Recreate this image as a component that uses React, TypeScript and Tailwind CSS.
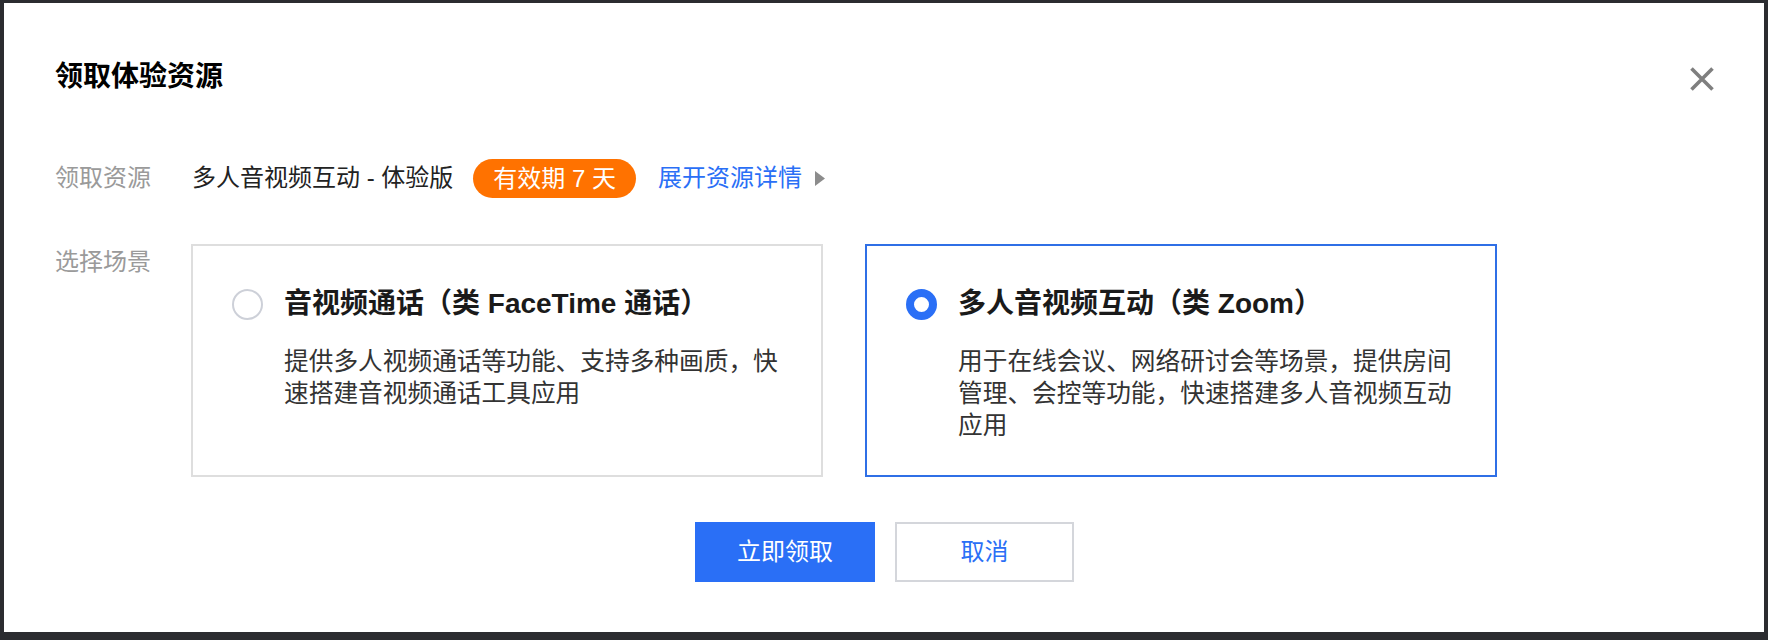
import { useState } from 'react';

type SceneId = 'call' | 'meeting';

interface Scene {
  id: SceneId;
  title: string;
  desc: string;
}

const scenes: Scene[] = [
  {
    id: 'call',
    title: '音视频通话（类 FaceTime 通话）',
    desc: '提供多人视频通话等功能、支持多种画质，快速搭建音视频通话工具应用',
  },
  {
    id: 'meeting',
    title: '多人音视频互动（类 Zoom）',
    desc: '用于在线会议、网络研讨会等场景，提供房间管理、会控等功能，快速搭建多人音视频互动应用',
  },
];

const font = "font-['Liberation_Sans','Noto_Sans_CJK_SC',sans-serif]";

export default function App() {
  const [selected, setSelected] = useState<SceneId>('meeting');

  return (
    <div className={`w-[1768px] h-[640px] bg-[#2b2c30] pt-[3px] pl-[4px] pr-[4px] pb-[8px] ${font}`}>
      <div className="h-full bg-white pl-[51px] pr-[50px] pt-[54px]">
        {/* Header */}
        <div className="flex items-center justify-between h-[40px]">
          <h2 className="text-[28px] leading-[40px] font-bold text-black">领取体验资源</h2>
          <button className="w-[24px] h-[24px] mt-[4px] flex items-center justify-center">
            <svg width="24" height="24" viewBox="0 0 24 24">
              <path d="M1.5 1.5 L22.5 22.5 M22.5 1.5 L1.5 22.5" stroke="#7f7f7f" strokeWidth="3.6" />
            </svg>
          </button>
        </div>

        {/* Resource row */}
        <div className="flex items-center mt-[61px] h-[40px] text-[24px] leading-[40px]">
          <div className="w-[137px] text-[#9a9a9a]">领取资源</div>
          <span className="text-[#222]">多人音视频互动 - 体验版</span>
          <span className="ml-[20px] h-[39px] px-[20px] rounded-full bg-[#ff7200] text-white leading-[39px]">
            有效期 7 天
          </span>
          <a className="ml-[22px] text-[#2a6ff6] cursor-pointer">展开资源详情</a>
          <svg className="ml-[13px]" width="10" height="15" viewBox="0 0 10 15">
            <path d="M0 0 L10 7.5 L0 15 Z" fill="#8c8c8c" />
          </svg>
        </div>

        {/* Scene row */}
        <div className="flex mt-[46px]">
          <div className="w-[136px] text-[24px] leading-[36px] text-[#9a9a9a]">选择场景</div>
          <div className="flex gap-[42px]">
            {scenes.map((s) => {
              const active = s.id === selected;
              return (
                <div
                  key={s.id}
                  onClick={() => setSelected(s.id)}
                  className={`w-[632px] h-[233px] border-2 cursor-pointer pl-[39px] pr-[28px] pt-[38px] ${
                    active ? 'border-[#2f6fe6]' : 'border-[#dedede]'
                  }`}
                >
                  <div className="flex items-center h-[40px]">
                    <span
                      className={`w-[31px] h-[31px] rounded-full shrink-0 ${
                        active ? 'border-[8px] border-[#2a6ff6]' : 'border-2 border-[#cdd0d8]'
                      }`}
                    />
                    <span className="ml-[21px] text-[28px] leading-[40px] font-bold text-[#1a1a1a]">
                      {s.title}
                    </span>
                  </div>
                  <p className="mt-[22px] pl-[52px] text-[24.7px] leading-[32px] text-[#333]">{s.desc}</p>
                </div>
              );
            })}
          </div>
        </div>

        {/* Footer */}
        <div className="flex justify-center gap-[20px] mt-[45px]">
          <button className="w-[180px] h-[60px] bg-[#2a6ff6] text-white text-[24px]">立即领取</button>
          <button className="w-[179px] h-[60px] border-2 border-[#d4d6db] bg-white text-[#2a6ff6] text-[24px]">
            取消
          </button>
        </div>
      </div>
    </div>
  );
}
